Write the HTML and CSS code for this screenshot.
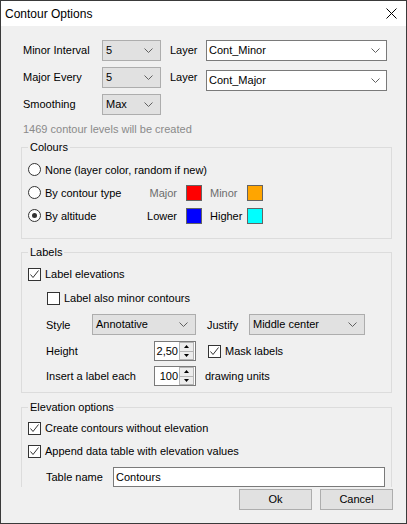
FILE: index.html
```html
<!DOCTYPE html>
<html>
<head>
<meta charset="utf-8">
<title>Contour Options</title>
<link rel="stylesheet" href="styles.css">
</head>
<body>
<div class="window">
  <div class="titlebar">
    <span class="title">Contour Options</span>
    <svg class="close" width="11" height="11" viewBox="0 0 11 11"><path d="M0.5 0.5L10.5 10.5M10.5 0.5L0.5 10.5" stroke="#000" stroke-width="1" fill="none"/></svg>
  </div>
  <div class="body">
    <div class="top-row">
      <span class="top-label">Minor Interval</span>
      <div class="combo combo-gray combo-small"><span class="combo-text">5</span><svg class="chev" width="9" height="5" viewBox="0 0 9 5"><polyline points="0.5,0.5 4.5,4.5 8.5,0.5" fill="none" stroke="#606060"/></svg></div>
      <span class="layer-label">Layer</span>
      <div class="combo combo-white combo-layer"><span class="combo-text">Cont_Minor</span><svg class="chev" width="9" height="5" viewBox="0 0 9 5"><polyline points="0.5,0.5 4.5,4.5 8.5,0.5" fill="none" stroke="#606060"/></svg></div>
    </div>
    <div class="top-row">
      <span class="top-label">Major Every</span>
      <div class="combo combo-gray combo-small"><span class="combo-text">5</span><svg class="chev" width="9" height="5" viewBox="0 0 9 5"><polyline points="0.5,0.5 4.5,4.5 8.5,0.5" fill="none" stroke="#606060"/></svg></div>
      <span class="layer-label">Layer</span>
      <div class="combo combo-white combo-layer combo-shift"><span class="combo-text">Cont_Major</span><svg class="chev" width="9" height="5" viewBox="0 0 9 5"><polyline points="0.5,0.5 4.5,4.5 8.5,0.5" fill="none" stroke="#606060"/></svg></div>
    </div>
    <div class="top-row">
      <span class="top-label">Smoothing</span>
      <div class="combo combo-gray combo-small"><span class="combo-text">Max</span><svg class="chev" width="9" height="5" viewBox="0 0 9 5"><polyline points="0.5,0.5 4.5,4.5 8.5,0.5" fill="none" stroke="#606060"/></svg></div>
    </div>
    <div class="info">1469 contour levels will be created</div>

    <fieldset class="group group-colours">
      <legend>Colours</legend>
      <div class="radio-row">
        <div class="radio-part"><span class="radio"></span><span>None (layer color, random if new)</span></div>
      </div>
      <div class="radio-row">
        <div class="radio-part"><span class="radio"></span><span>By contour type</span></div>
        <span class="swlabel-r dim">Major</span><span class="swatch sw-red"></span>
        <span class="swlabel-l dim">Minor</span><span class="swatch sw-orange"></span>
      </div>
      <div class="radio-row">
        <div class="radio-part"><span class="radio radio-on"></span><span>By altitude</span></div>
        <span class="swlabel-r">Lower</span><span class="swatch sw-blue"></span>
        <span class="swlabel-l">Higher</span><span class="swatch sw-cyan"></span>
      </div>
    </fieldset>

    <fieldset class="group group-labels">
      <legend>Labels</legend>
      <div class="check-row row-a">
        <span class="check"><svg width="11" height="11" viewBox="0 0 11 11"><polyline points="1.5,5.5 4,8.5 9.5,1.5" fill="none" stroke="#333"/></svg></span><span>Label elevations</span>
      </div>
      <div class="check-row row-b">
        <span class="check"></span><span>Label also minor contours</span>
      </div>
      <div class="field-row row-c">
        <span class="lbl-style">Style</span>
        <div class="combo combo-gray combo-style"><span class="combo-text">Annotative</span><svg class="chev" width="9" height="5" viewBox="0 0 9 5"><polyline points="0.5,0.5 4.5,4.5 8.5,0.5" fill="none" stroke="#606060"/></svg></div>
        <span class="lbl-justify">Justify</span>
        <div class="combo combo-gray combo-justify"><span class="combo-text">Middle center</span><svg class="chev" width="9" height="5" viewBox="0 0 9 5"><polyline points="0.5,0.5 4.5,4.5 8.5,0.5" fill="none" stroke="#606060"/></svg></div>
      </div>
      <div class="field-row row-d">
        <span class="lbl-wide">Height</span>
        <div class="spin"><span class="spin-val">2,50</span><span class="spin-btns"><span class="spin-btn"><svg width="5" height="3" viewBox="0 0 5 3"><polygon points="0,3 2.5,0 5,3" fill="#000"/></svg></span><span class="spin-btn spin-down"><svg width="5" height="3" viewBox="0 0 5 3"><polygon points="0,0 5,0 2.5,3" fill="#000"/></svg></span></span></div>
        <span class="check check-mask"><svg width="11" height="11" viewBox="0 0 11 11"><polyline points="1.5,5.5 4,8.5 9.5,1.5" fill="none" stroke="#333"/></svg></span><span>Mask labels</span>
      </div>
      <div class="field-row row-e">
        <span class="lbl-wide">Insert a label each</span>
        <div class="spin"><span class="spin-val">100</span><span class="spin-btns"><span class="spin-btn"><svg width="5" height="3" viewBox="0 0 5 3"><polygon points="0,3 2.5,0 5,3" fill="#000"/></svg></span><span class="spin-btn spin-down"><svg width="5" height="3" viewBox="0 0 5 3"><polygon points="0,0 5,0 2.5,3" fill="#000"/></svg></span></span></div>
        <span class="units">drawing units</span>
      </div>
    </fieldset>

    <fieldset class="group group-elev">
      <legend>Elevation options</legend>
      <div class="check-row erow-1">
        <span class="check"><svg width="11" height="11" viewBox="0 0 11 11"><polyline points="1.5,5.5 4,8.5 9.5,1.5" fill="none" stroke="#333"/></svg></span><span>Create contours without elevation</span>
      </div>
      <div class="check-row erow-2">
        <span class="check"><svg width="11" height="11" viewBox="0 0 11 11"><polyline points="1.5,5.5 4,8.5 9.5,1.5" fill="none" stroke="#333"/></svg></span><span>Append data table with elevation values</span>
      </div>
      <div class="field-row erow-3">
        <span class="lbl-table">Table name</span>
        <div class="textbox">Contours</div>
      </div>
    </fieldset>

    <div class="buttons">
      <div class="btn">Ok</div>
      <div class="btn">Cancel</div>
    </div>
  </div>
</div>
</body>
</html>
```

FILE: styles.css
```css
html, body {
  margin: 0;
  padding: 0;
}
body {
  font-family: "Liberation Sans", Arial, sans-serif;
  font-size: 11px;
  color: #000;
  background: #f0f0f0;
}
.window {
  width: 407px;
  height: 524px;
  box-sizing: border-box;
  border: 1px solid #3a3a3a;
  background: #f0f0f0;
  display: flex;
  flex-direction: column;
  overflow: hidden;
}
.titlebar {
  height: 25px;
  flex: none;
  background: #fff;
  display: flex;
  align-items: center;
  justify-content: space-between;
  padding: 0 9px 0 4px;
}
.title {
  font-size: 12px;
  line-height: 14px;
}
.close {
  display: block;
}
.body {
  padding: 14px 13px 0 20px;
  display: flex;
  flex-direction: column;
}
.top-row {
  display: flex;
  align-items: flex-start;
  height: 21px;
  padding-left: 2px;
  margin-bottom: 6px;
}
.top-label {
  width: 79px;
  line-height: 21px;
}
.layer-label {
  width: 36px;
  margin-left: 9px;
  line-height: 21px;
}
.combo {
  height: 21px;
  box-sizing: border-box;
  display: flex;
  align-items: center;
  justify-content: space-between;
  padding: 0 7px 0 3px;
}
.combo-gray {
  background: #e1e1e1;
  border: 1px solid #adadad;
}
.combo-white {
  background: #fff;
  border: 1px solid #7a7a7a;
  padding-left: 2px;
  padding-right: 6px;
}
.combo-small {
  width: 59px;
}
.combo-layer {
  width: 181px;
}
.combo-shift {
  margin-top: 3px;
}
.combo-text {
  line-height: 13px;
}
.chev {
  display: block;
  flex: none;
}
.info {
  color: #8a8a8a;
  line-height: 13px;
  padding-left: 2px;
  margin-top: 2px;
}
.group {
  width: 371px;
  box-sizing: border-box;
  margin: 0;
  padding: 0;
  border: 1px solid #dcdcdc;
  min-width: 0;
}
.group legend {
  padding: 0 2px;
  margin-left: 6px;
  line-height: 13px;
  font-size: 11px;
}
.group-colours {
  margin-top: 5px;
  padding-top: 4px;
  padding-bottom: 11px;
}
.radio-row {
  display: flex;
  align-items: center;
  height: 23px;
}
.radio-part {
  display: flex;
  align-items: center;
  width: 118px;
  padding-left: 6px;
  box-sizing: border-box;
  white-space: nowrap;
}
.radio {
  width: 13px;
  height: 13px;
  box-sizing: border-box;
  border: 1px solid #333;
  border-radius: 50%;
  background: #fff;
  margin-right: 4px;
  flex: none;
  display: flex;
  align-items: center;
  justify-content: center;
}
.radio-on::after {
  content: "";
  width: 5px;
  height: 5px;
  border-radius: 50%;
  background: #333;
}
.swlabel-r {
  width: 37px;
  text-align: right;
  margin-right: 9px;
}
.swlabel-l {
  width: 37px;
  margin-left: 8px;
}
.dim {
  color: #6d6d6d;
}
.swatch {
  width: 16px;
  height: 16px;
  box-sizing: border-box;
  border: 1px solid #646464;
  flex: none;
}
.sw-red { background: #ff0000; }
.sw-orange { background: #ffa500; }
.sw-blue { background: #0000ff; }
.sw-cyan { background: #00ffff; }

.group-labels {
  margin-top: 7px;
  padding-bottom: 6px;
}
.check-row {
  display: flex;
  align-items: center;
  height: 20px;
  padding-left: 6px;
}
.check {
  width: 13px;
  height: 13px;
  box-sizing: border-box;
  border: 1px solid #333;
  background: #fff;
  margin-right: 4px;
  flex: none;
}
.check svg {
  display: block;
}
.row-a { margin-top: 5px; }
.row-b { margin-top: 4px; padding-left: 25px; }
.field-row {
  display: flex;
  align-items: center;
  padding-left: 24px;
}
.row-c { margin-top: 6px; height: 21px; }
.row-d { margin-top: 6px; height: 20px; }
.row-e { margin-top: 5px; height: 20px; }
.lbl-style { width: 46px; }
.combo-style { width: 104px; }
.lbl-justify { width: 42px; margin-left: 11px; }
.combo-justify { width: 116px; }
.lbl-wide { width: 108px; }
.spin {
  width: 42px;
  height: 20px;
  box-sizing: border-box;
  border: 1px solid #7a7a7a;
  background: #fff;
  display: flex;
}
.spin-val {
  flex: 1;
  text-align: right;
  line-height: 18px;
  padding-right: 1px;
}
.spin-btns {
  width: 15px;
  margin-right: 1px;
  box-sizing: border-box;
  border: 1px solid #b4b4b4;
  background: #ececec;
  display: flex;
  flex-direction: column;
}
.spin-btn {
  flex: 1;
  display: flex;
  align-items: center;
  justify-content: center;
}
.spin-btn svg {
  display: block;
}
.spin-down {
  border-top: 1px solid #b4b4b4;
}
.check-mask {
  margin-left: 12px;
}
.units {
  margin-left: 9px;
}
.group-elev {
  margin-top: 8px;
  border-bottom: none;
  padding-bottom: 0;
}
.erow-1 { margin-top: 4px; }
.erow-2 { margin-top: 3px; }
.erow-3 { margin-top: 6px; height: 20px; }
.lbl-table { width: 67px; }
.textbox {
  width: 272px;
  height: 20px;
  box-sizing: border-box;
  border: 1px solid #7a7a7a;
  background: #fff;
  padding-left: 2px;
  line-height: 18px;
}
.buttons {
  display: flex;
  justify-content: flex-end;
  gap: 8px;
  margin-top: 2px;
}
.btn {
  width: 73px;
  height: 21px;
  box-sizing: border-box;
  background: #e1e1e1;
  border: 1px solid #adadad;
  text-align: center;
  line-height: 19px;
}
```
